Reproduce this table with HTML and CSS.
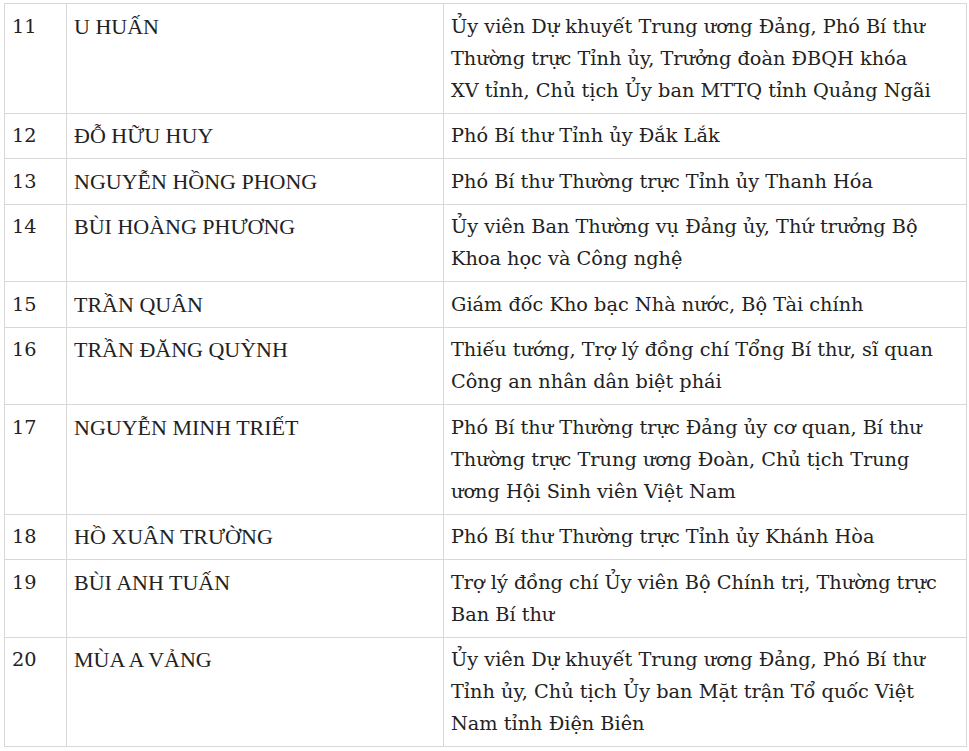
FILE: index.html
```html
<!DOCTYPE html>
<html lang="vi">
<head>
<meta charset="utf-8">
<link rel="stylesheet" href="styles.css">
</head>
<body>
<div class="wrap">
<table class="list">
<colgroup><col class="c-no"><col class="c-name"><col class="c-desc"></colgroup>
<tbody>
<tr><td class="no">11</td><td class="name">U HUẤN</td><td class="desc">Ủy viên Dự khuyết Trung ương Đảng, Phó Bí thư Thường trực Tỉnh ủy, Trưởng đoàn ĐBQH khóa XV&nbsp;tỉnh, Chủ tịch Ủy ban MTTQ tỉnh Quảng Ngãi</td></tr>
<tr><td class="no">12</td><td class="name">ĐỖ HỮU HUY</td><td class="desc">Phó Bí thư Tỉnh ủy Đắk Lắk</td></tr>
<tr><td class="no">13</td><td class="name">NGUYỄN HỒNG PHONG</td><td class="desc">Phó Bí thư Thường trực Tỉnh ủy Thanh Hóa</td></tr>
<tr><td class="no">14</td><td class="name">BÙI HOÀNG PHƯƠNG</td><td class="desc">Ủy viên Ban Thường vụ Đảng ủy, Thứ trưởng Bộ Khoa học và Công nghệ</td></tr>
<tr><td class="no">15</td><td class="name">TRẦN QUÂN</td><td class="desc">Giám đốc Kho bạc Nhà nước, Bộ Tài chính</td></tr>
<tr><td class="no">16</td><td class="name">TRẦN ĐĂNG QUỲNH</td><td class="desc">Thiếu tướng, Trợ lý đồng chí Tổng Bí thư, sĩ quan Công an nhân dân biệt phái</td></tr>
<tr><td class="no">17</td><td class="name">NGUYỄN MINH TRIẾT</td><td class="desc">Phó Bí thư Thường trực Đảng ủy cơ quan, Bí thư Thường trực Trung ương Đoàn, Chủ tịch Trung ương Hội Sinh viên Việt Nam</td></tr>
<tr><td class="no">18</td><td class="name">HỒ XUÂN TRƯỜNG</td><td class="desc">Phó Bí thư Thường trực Tỉnh ủy Khánh Hòa</td></tr>
<tr><td class="no">19</td><td class="name">BÙI ANH TUẤN</td><td class="desc">Trợ lý đồng chí Ủy viên Bộ Chính trị, Thường trực Ban Bí thư</td></tr>
<tr><td class="no">20</td><td class="name">MÙA A VẢNG</td><td class="desc">Ủy viên Dự khuyết Trung ương Đảng, Phó Bí thư Tỉnh ủy, Chủ tịch Ủy ban Mặt trận Tổ quốc Việt Nam tỉnh Điện Biên</td></tr>
</tbody>
</table>
</div>
</body>
</html>
```
FILE: styles.css
```css
html, body {
  margin: 0;
  padding: 0;
  background: #fff;
}
.wrap {
  padding: 3px 0 0 4px;
}
.list {
  border-collapse: collapse;
  table-layout: fixed;
  width: 962px;
  font-family: "DejaVu Serif", "Liberation Serif", serif;
  font-size: 19.3px;
  line-height: 32px;
  color: #222;
}
.c-no { width: 62px; }
.c-name { width: 377px; }
.c-desc { width: 523px; }
.list td {
  border: 1px solid #d8d8d8;
  padding: 6.5px 7px 6px;
  vertical-align: top;
  text-align: left;
}
.list td.name {
  font-family: "Liberation Serif", serif;
  font-size: 22px;
}
```
